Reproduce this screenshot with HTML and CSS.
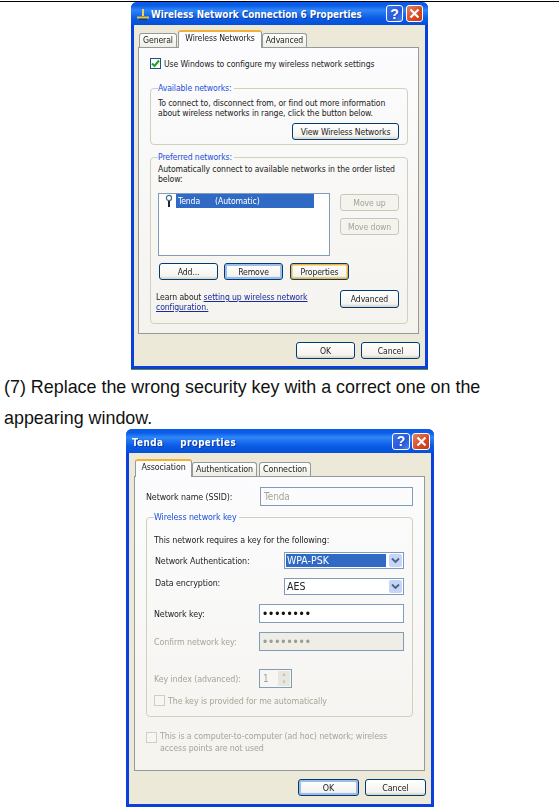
FILE: index.html
```html
<!DOCTYPE html>
<html lang="en">
<head>
  <meta charset="UTF-8">
  <title>Wireless network properties</title>
  <link rel="stylesheet" href="styles.css">
</head>
<body>
  <div class="top-rule"></div>

  <div class="window network-window">
    <div class="titlebar">
      <svg class="title-icon" width="14" height="14" viewBox="0 0 14 14">
        <path d="M1 10.5h12" stroke="#e8c33c" stroke-width="2"/>
        <path d="M7 2v7" stroke="#f0d060" stroke-width="2"/>
        <path d="M3 12.5h8" stroke="#3a3a20" stroke-width="1.5"/>
      </svg>
      <span class="title-text">Wireless Network Connection 6 Properties</span>
      <span class="cap-btn help">?</span>
      <span class="cap-btn close">
        <svg width="11" height="11" viewBox="0 0 11 11"><path d="M1.5 1.5l8 8M9.5 1.5l-8 8" stroke="#fff" stroke-width="2.2"/></svg>
      </span>
    </div>
    <div class="window-body">
      <div class="tabs">
        <span class="tab tab-general">General</span>
        <span class="tab active tab-wireless">Wireless Networks</span>
        <span class="tab tab-advanced">Advanced</span>
      </div>
      <div class="panel">
        <div class="check-row">
          <span class="checkbox checked">
            <svg width="9" height="9" viewBox="0 0 9 9"><path d="M1 4.5l2.5 2.5L8 1.5" fill="none" stroke="#21a121" stroke-width="2"/></svg>
          </span>
          <span>Use Windows to configure my wireless network settings</span>
        </div>

        <fieldset class="group available">
          <legend>Available networks:</legend>
          <p class="group-text">To connect to, disconnect from, or find out more information<br>about wireless networks in range, click the button below.</p>
          <div class="view-row"><button class="btn view-btn">View Wireless Networks</button></div>
        </fieldset>

        <fieldset class="group preferred">
          <legend>Preferred networks:</legend>
          <p class="group-text">Automatically connect to available networks in the order listed<br>below:</p>
          <div class="list-row">
            <div class="net-list">
              <svg class="net-icon" width="8" height="14" viewBox="0 0 8 14">
                <circle cx="4" cy="4" r="2.6" fill="#fff" stroke="#3f6f8f" stroke-width="1.2"/>
                <path d="M4 7v6" stroke="#223" stroke-width="2"/>
              </svg>
              <span class="net-selected">Tenda<span class="net-auto">(Automatic)</span></span>
            </div>
            <div class="move-btns">
              <button class="btn off">Move up</button>
              <button class="btn off">Move down</button>
            </div>
          </div>
          <div class="list-actions">
            <button class="btn">Add...</button>
            <button class="btn hover-blue">Remove</button>
            <button class="btn hover-orange">Properties</button>
          </div>
          <div class="learn-row">
            <p class="learn">Learn about <a href="#">setting up wireless network<br>configuration.</a></p>
            <button class="btn learn-btn">Advanced</button>
          </div>
        </fieldset>
      </div>
      <div class="footer">
        <button class="btn">OK</button>
        <button class="btn">Cancel</button>
      </div>
    </div>
  </div>

  <p class="step">(7) Replace the wrong security key with a correct one on the<br>appearing window.</p>

  <div class="window tenda-window">
    <div class="titlebar">
      <span class="title-text spaced">Tenda<span class="title-gap"></span>properties</span>
      <span class="cap-btn help">?</span>
      <span class="cap-btn close">
        <svg width="11" height="11" viewBox="0 0 11 11"><path d="M1.5 1.5l8 8M9.5 1.5l-8 8" stroke="#fff" stroke-width="2.2"/></svg>
      </span>
    </div>
    <div class="window-body">
      <div class="tabs">
        <span class="tab active tab-assoc">Association</span>
        <span class="tab tab-auth">Authentication</span>
        <span class="tab tab-conn">Connection</span>
      </div>
      <div class="panel">
        <div class="field ssid-row">
          <label class="name-label">Network name (SSID):</label>
          <div class="input ssid-input muted">Tenda</div>
        </div>

        <fieldset class="group key-group">
          <legend>Wireless network key</legend>
          <p class="key-intro">This network requires a key for the following:</p>
          <div class="field auth-row">
            <label class="select-label">Network Authentication:</label>
            <div class="select"><span class="select-value picked">WPA-PSK</span><span class="select-arrow"><svg width="9" height="7" viewBox="0 0 9 7"><path d="M1 1.5l3.5 3.5L8 1.5" fill="none" stroke="#4d6185" stroke-width="1.8"/></svg></span></div>
          </div>
          <div class="field enc-row">
            <label class="select-label enc-label">Data encryption:</label>
            <div class="select"><span class="select-value">AES</span><span class="select-arrow"><svg width="9" height="7" viewBox="0 0 9 7"><path d="M1 1.5l3.5 3.5L8 1.5" fill="none" stroke="#4d6185" stroke-width="1.8"/></svg></span></div>
          </div>
          <div class="field key-row">
            <label>Network key:</label>
            <div class="input key-input">••••••••</div>
          </div>
          <div class="field confirm-row">
            <label class="muted">Confirm network key:</label>
            <div class="input key-input confirm-input">••••••••</div>
          </div>
          <div class="field index-row">
            <label class="muted">Key index (advanced):</label>
            <div class="input spin-input muted">1
              <span class="spin"><i>▴</i><i>▾</i></span>
            </div>
          </div>
          <div class="check-row auto-row muted">
            <span class="checkbox off"></span>
            <span>The key is provided for me automatically</span>
          </div>
        </fieldset>

        <div class="check-row adhoc-row muted">
          <span class="checkbox off"></span>
          <span class="adhoc-text">This is a computer-to-computer (ad hoc) network; wireless<br>access points are not used</span>
        </div>
      </div>
      <div class="footer">
        <button class="btn hover-blue">OK</button>
        <button class="btn">Cancel</button>
      </div>
    </div>
  </div>
</body>
</html>
```

FILE: styles.css
```css
* {
  box-sizing: border-box;
}

body {
  margin: 0;
  background-color: #fff;
  color: #000;
  font-family: "Liberation Sans", Arial, sans-serif;
}

.top-rule {
  height: 2px;
  border-top: 1px solid #fff;
  background-color: #000;
}

/* xp dialog */
.window {
  display: flex;
  flex-direction: column;
  border: 3px solid #0a3fdc;
  border-top: none;
  border-radius: 6px 6px 0 0;
  background-color: #ece9d8;
  font-family: "DejaVu Sans Condensed", "DejaVu Sans", sans-serif;
  font-size: 8.6px;
  letter-spacing: -0.1px;
  white-space: nowrap;
  color: #222;
  filter: blur(0.3px);
}

.network-window {
  width: 297px;
  height: 367px;
  margin-left: 131px;
  box-shadow: 0 1px 0 #5d8a44;
}

.tenda-window {
  width: 308px;
  height: 378px;
  margin-left: 126px;
  font-size: 8.85px;
}

.titlebar {
  display: flex;
  align-items: center;
  flex: none;
  height: 24px;
  margin: 0 -3px;
  padding: 0 5px;
  border-radius: 6px 6px 0 0;
  background: linear-gradient(#0a5ce8, #0a5ce8 15%, #2f86f5 35%, #0b5be6 70%, #0450d8);
  color: #fff;
}

.network-window .titlebar {
  height: 23px;
}

.tenda-window .titlebar {
  padding-right: 4px;
}

.title-icon {
  margin: 0 1px 0 0;
}

.title-text {
  flex: 1;
  padding-top: 1px;
  font-size: 9.8px;
  font-weight: bold;
  letter-spacing: 0;
  text-shadow: 1px 1px 0 #0f3a9e;
}

.spaced {
  padding-top: 3px;
  letter-spacing: 0.4px;
  margin-left: 1px;
}

.title-gap {
  display: inline-block;
  width: 17px;
}

.cap-btn {
  display: flex;
  align-items: center;
  justify-content: center;
  width: 17px;
  height: 17px;
  margin-left: 3px;
  border: 1px solid #fff;
  border-radius: 3px;
  font-size: 14px;
  font-weight: bold;
  font-family: "Liberation Sans", sans-serif;
  color: #fff;
}

.tenda-window .cap-btn {
  width: 18px;
  margin-left: 2px;
}

.help {
  background: linear-gradient(135deg, #3f74e8, #2a57d8 60%, #4a84ee);
}

.close {
  background: linear-gradient(135deg, #e8815f, #d9471f 60%, #c43a18);
}

.window-body {
  display: flex;
  flex-direction: column;
  flex: 1;
  min-height: 0;
}

.network-window .window-body {
  padding: 6px 6px 0 4px;
}

.tenda-window .window-body {
  padding: 6px 6px 0 5px;
}

/* tabs */
.tabs {
  display: flex;
  align-items: flex-end;
  height: 16px;
  margin-left: 1px;
  position: relative;
  z-index: 1;
}

.tenda-window .tabs {
  height: 17px;
}

.tab {
  display: flex;
  align-items: center;
  justify-content: center;
  height: 14px;
  padding-bottom: 1px;
  border: 1px solid #919b9c;
  border-bottom: none;
  border-radius: 3px 3px 0 0;
  background: linear-gradient(#fff, #eeeee5);
}

.tab.active {
  height: 18px;
  margin-bottom: -1px;
  padding-bottom: 4px;
  border-top: 2px solid #f2b132;
  background: #fcfcfe;
}

.tab-general { width: 38px; margin-right: 1px; }
.tab-wireless { width: 84px; }
.tab-advanced { width: 45px; }
.tab-assoc { width: 57px; }
.tab-auth { width: 65px; margin-right: 2px; }
.tab-conn { width: 52px; }

.panel {
  flex: none;
  border: 1px solid #919b9c;
  padding: 10px 10px 0 11px;
  background: linear-gradient(#fcfcfe, #f4f3ee);
}

.network-window .panel {
  height: 287px;
}

.tenda-window .panel {
  height: 295px;
  padding-right: 11px;
}

.check-row {
  display: flex;
  align-items: center;
  gap: 3px;
  height: 11px;
}

.checkbox {
  display: flex;
  align-items: center;
  justify-content: center;
  flex: none;
  width: 11px;
  height: 11px;
  border: 1px solid #1c5180;
  background-color: #fff;
}

.checkbox.off {
  border-color: #cfcfc4;
  background-color: #f7f6f1;
}

/* group boxes */
.group {
  margin: 0;
  padding: 0 8px 0 7px;
  border: 1px solid #d0d0bf;
  border-radius: 4px;
  min-width: 0;
}

.group legend {
  padding: 0 2px 0 0;
  height: 12px;
  line-height: 12px;
  color: #1a4fd8;
}

.group-text {
  margin: 0;
  line-height: 10px;
}

.available {
  height: 63px;
  margin-top: 13px;
}

.available .group-text {
  padding-top: 4px;
}

.view-row {
  display: flex;
  justify-content: flex-end;
  margin-top: 5px;
}

.preferred {
  height: 173px;
  margin-top: 6px;
}

.preferred .group-text {
  padding-top: 1px;
}

.list-row {
  display: flex;
  gap: 10px;
  margin-top: 9px;
}

.net-list {
  display: flex;
  align-items: flex-start;
  gap: 3px;
  width: 172px;
  height: 63px;
  padding: 0 0 0 6px;
  border: 1px solid #7f9db9;
  background-color: #fff;
}

.net-icon {
  flex: none;
}

.net-selected {
  display: block;
  width: 138px;
  height: 14px;
  padding-left: 2px;
  line-height: 14px;
  background-color: #316ac5;
  color: #fff;
}

.net-auto {
  margin-left: 15px;
}

.move-btns {
  display: flex;
  flex-direction: column;
  gap: 7px;
  padding-top: 1px;
}

.list-actions {
  display: flex;
  gap: 6px;
  margin: 7px 0 0 1px;
}

.hover-orange {
  margin-left: 1px;
}

.learn-row {
  display: flex;
  justify-content: space-between;
  margin: 10px 0 0 -2px;
}

.learn {
  margin: 2px 0 0;
  line-height: 10px;
}

.learn a {
  color: #1a2a9c;
}

/* buttons */
.btn {
  width: 59px;
  height: 17px;
  padding: 0;
  border: 1px solid #003c74;
  border-radius: 3px;
  background: linear-gradient(#fff, #f4f3ee 80%, #d6d0c5);
  font: inherit;
  letter-spacing: inherit;
  color: #222;
}

.btn.off {
  border-color: #c9c7ba;
  background: #f4f3ee;
  color: #a5a496;
}

.hover-blue {
  box-shadow: inset 0 0 0 2px #9dbcea;
}

.hover-orange {
  box-shadow: inset 0 0 0 1.5px #f0b13c;
}

.view-btn {
  width: 107px;
}

.learn-btn {
  height: 18px;
}

.footer {
  display: flex;
  justify-content: flex-end;
  gap: 6px;
  padding-top: 8px;
}

.network-window .footer {
  margin-right: -1px;
}

.tenda-window .footer {
  margin-right: -1px;
}

.tenda-window .footer .btn {
  width: 61px;
}

/* step text between the dialogs */
.step {
  height: 57px;
  margin: 3px 0 0 4px;
  font-size: 17.9px;
  line-height: 31px;
  white-space: nowrap;
  color: #111;
}

/* tenda form */
.muted {
  color: #a6a598;
}

.field {
  display: flex;
  align-items: center;
}

.field label {
  flex: none;
  width: 105px;
}

.input {
  display: flex;
  align-items: center;
  padding-left: 3px;
  border: 1px solid #7f9db9;
  background-color: #fff;
}

.name-label {
  width: 114px !important;
}

.ssid-input {
  width: 153px;
  height: 19px;
  font-size: 10px;
  background-color: transparent;
}

.key-group {
  height: 206px;
  margin-top: 5px;
  width: 267px;
}

.key-intro {
  margin: 0;
  padding-top: 12px;
  line-height: 10px;
}

.select-label {
  width: 129px !important;
  margin-left: 1px;
}

.select {
  display: flex;
  align-items: center;
  width: 120px;
  height: 17px;
  padding: 1px;
  border: 1px solid #7f9db9;
  background-color: #fff;
}

.select-value {
  flex: 1;
  height: 13px;
  margin-right: 3px;
  padding-left: 1px;
  line-height: 13px;
  font-size: 10.5px;
  letter-spacing: 0;
}

.select-value.picked {
  background-color: #316ac5;
  color: #fff;
}

.select-arrow {
  display: flex;
  align-items: center;
  justify-content: center;
  flex: none;
  width: 13px;
  height: 13px;
  border-radius: 2px;
  background-color: #c5d5f5;
}

.auth-row {
  margin-top: 7px;
}

.enc-row {
  align-items: flex-start;
  margin-top: 9px;
}

.enc-label {
  line-height: 10px;
}

.key-row {
  margin-top: 9px;
}

.key-input {
  width: 145px;
  height: 19px;
  font-family: "Liberation Sans", sans-serif;
  font-size: 12px;
  letter-spacing: 1.9px;
  color: #111;
}

.confirm-row {
  margin-top: 9px;
}

.confirm-input {
  background-color: #efeee6;
  color: #9c9c90;
}

.index-row {
  margin-top: 18px;
}

.spin-input {
  justify-content: space-between;
  width: 33px;
  height: 19px;
  padding: 0 1px 0 3px;
  font-size: 10px;
  background-color: transparent;
}

.spin {
  display: flex;
  flex-direction: column;
  width: 12px;
  height: 15px;
  background-color: #e8e7de;
  font-size: 7px;
  line-height: 7.5px;
  text-align: center;
  color: #c4c3b6;
}

.spin i {
  font-style: normal;
}

.auto-row {
  margin-top: 7px;
}

.adhoc-row {
  align-items: flex-start;
  height: 22px;
  margin-top: 15px;
  line-height: 12px;
}

.adhoc-text {
  margin-top: -2px;
}
```
